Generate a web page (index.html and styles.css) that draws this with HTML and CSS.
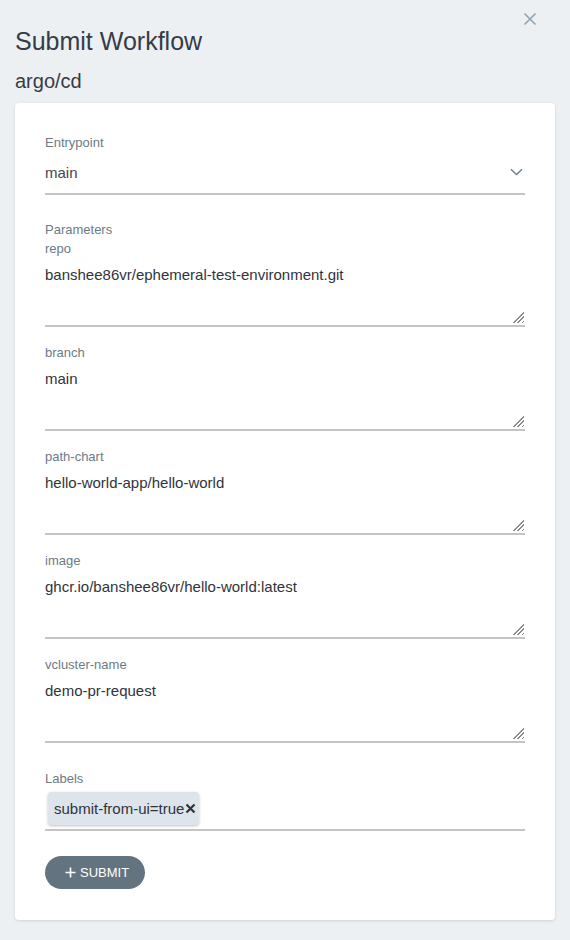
FILE: index.html
```html
<!DOCTYPE html>
<html>
<head>
<meta charset="utf-8">
<link rel="stylesheet" href="styles.css">
</head>
<body>
<div class="panel">
  <button class="close" aria-label="close">
    <svg width="14" height="14" viewBox="0 0 14 14"><path d="M1.5 1.5L12.5 12.5M12.5 1.5L1.5 12.5" stroke="#8fa3b0" stroke-width="1.6" fill="none"/></svg>
  </button>
  <h1 class="title">Submit Workflow</h1>
  <h2 class="subtitle">argo/cd</h2>
  <div class="card">
    <div class="label">Entrypoint</div>
    <div class="select">
      <span>main</span>
      <svg width="13" height="8" viewBox="0 0 13 8"><path d="M1 1.2L6.5 6.5L12 1.2" stroke="#6c7d89" stroke-width="1.4" fill="none"/></svg>
    </div>

    <div class="label params-title">Parameters</div>
    <div class="param">
      <div class="label">repo</div>
      <div class="ta-wrap"><textarea class="ta">banshee86vr/ephemeral-test-environment.git</textarea></div>
    </div>
    <div class="param">
      <div class="label">branch</div>
      <div class="ta-wrap"><textarea class="ta">main</textarea></div>
    </div>
    <div class="param">
      <div class="label">path-chart</div>
      <div class="ta-wrap"><textarea class="ta">hello-world-app/hello-world</textarea></div>
    </div>
    <div class="param">
      <div class="label">image</div>
      <div class="ta-wrap"><textarea class="ta">ghcr.io/banshee86vr/hello-world:latest</textarea></div>
    </div>
    <div class="param">
      <div class="label">vcluster-name</div>
      <div class="ta-wrap"><textarea class="ta">demo-pr-request</textarea></div>
    </div>

    <div class="label labels-title">Labels</div>
    <div class="tags">
      <span class="chip">submit-from-ui=true<svg class="chip-x" width="11" height="11" viewBox="0 0 11 11"><path d="M1.5 1.5L9.5 9.5M9.5 1.5L1.5 9.5" stroke="#2f343b" stroke-width="2.2" fill="none"/></svg></span>
    </div>

    <button class="submit"><svg class="plus" width="11" height="11" viewBox="0 0 11 11"><path d="M5.5 0.5V10.5M0.5 5.5H10.5" stroke="#fff" stroke-width="1.6" fill="none"/></svg>SUBMIT</button>
  </div>
</div>
</body>
</html>
```

FILE: styles.css
```css
html, body {
  margin: 0;
  padding: 0;
  background: #edf0f3;
  font-family: "Liberation Sans", Arial, sans-serif;
}
.panel {
  position: relative;
  padding: 26px 15px 21px 15px;
}
.close {
  position: absolute;
  top: 12px;
  left: 523px;
  width: 14px;
  height: 14px;
  padding: 0;
  border: 0;
  background: none;
  display: block;
}
.close svg { display: block; }
.title {
  margin: 0;
  font-size: 25px;
  line-height: 30px;
  font-weight: 400;
  color: #363c46;
}
.subtitle {
  margin: 13px 0 0 0;
  font-size: 20px;
  line-height: 24px;
  font-weight: 400;
  color: #363c46;
}
.card {
  margin-top: 10px;
  background: #fff;
  border-radius: 4px;
  box-shadow: 0 1px 3px rgba(0,0,0,0.12);
  padding: 30px 30px 31px 30px;
}
.label {
  font-size: 13px;
  line-height: 19px;
  color: #6c7a86;
}
.select {
  display: flex;
  justify-content: space-between;
  align-items: center;
  font-size: 15px;
  line-height: 20px;
  color: #3f4650;
  padding: 11px 2px 10px 0;
  border-bottom: 2px solid #c4c4c4;
}
.select svg { display: block; margin-top: -2px; }
.params-title { margin-top: 25px; }
.param { margin-bottom: 16px; }
.param:last-of-type { margin-bottom: 0; }
.ta-wrap {
  position: relative;
}
.ta-wrap::after {
  content: "";
  position: absolute;
  right: 1px;
  bottom: 4px;
  width: 12px;
  height: 12px;
  background: repeating-linear-gradient(135deg, #8a8a8a 0, #8a8a8a 1px, transparent 1px, transparent 3px);
  clip-path: polygon(100% 0, 100% 100%, 0 100%);
  pointer-events: none;
}
.ta {
  display: block;
  box-sizing: border-box;
  width: 100%;
  height: 69px;
  margin: 0;
  padding: 7px 0 0 0;
  border: 0;
  border-bottom: 2px solid #c4c4c4;
  font-family: "Liberation Sans", Arial, sans-serif;
  font-size: 15px;
  line-height: 20px;
  color: #2f343b;
  background: #fff;
  resize: none;
  outline: none;
  overflow: hidden;
}
.labels-title { margin-top: 26px; }
.tags {
  padding: 4px 0 4px 3px;
  border-bottom: 2px solid #c4c4c4;
  display: flex;
}
.chip {
  display: inline-flex;
  align-items: center;
  height: 33px;
  box-sizing: border-box;
  padding: 0 3px 0 6px;
  background: #dde4eb;
  border-radius: 4px;
  box-shadow: 0 1px 3px rgba(0,0,0,0.25);
  font-size: 15px;
  color: #2f343b;
}
.chip-x {
  display: block;
  margin-left: 1px;
}
.submit {
  margin-top: 25px;
  display: flex;
  align-items: center;
  height: 33px;
  width: 100px;
  padding: 0 0 0 20px;
  box-sizing: border-box;
  border: 0;
  border-radius: 17px;
  background: #637480;
  color: #fff;
  font-family: "Liberation Sans", Arial, sans-serif;
  font-size: 13px;
}
.plus {
  display: block;
  margin-right: 4px;
}
```
